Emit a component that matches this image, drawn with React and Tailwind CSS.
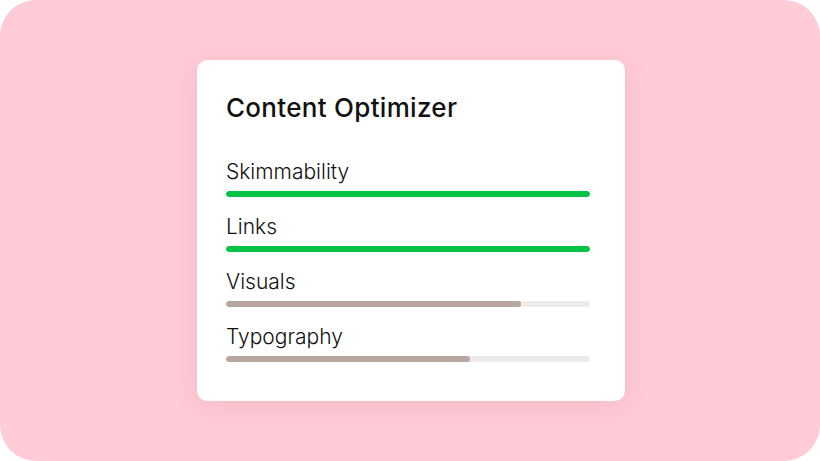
export default function App() {
  const rows = [
    { label: "Skimmability", pct: 100, color: "bg-[#00c244]" },
    { label: "Links", pct: 100, color: "bg-[#00c244]" },
    { label: "Visuals", pct: 81, color: "bg-[#b7a79f]" },
    { label: "Typography", pct: 67, color: "bg-[#b7a79f]" },
  ];
  return (
    <div className="w-[820px] h-[461px] bg-white">
      <div
        className="w-full h-full rounded-[36px] bg-[#ffcbd6] pl-[197px] pt-[60px]"
        style={{ fontFamily: "Inter, 'Noto Sans', sans-serif" }}
      >
        <div className="w-[428px] bg-white rounded-[10px] shadow-[0_4px_24px_rgba(120,40,60,0.10)] pl-[29px] pt-[32px] pb-[39px] text-[#111111]">
          <div className="text-[26px] leading-[32px] font-medium tracking-[0.3px]">Content Optimizer</div>
          <div className="mt-[34px] flex flex-col gap-[16px]">
            {rows.map((r) => (
              <div key={r.label} className="flex flex-col">
                <div className="text-[21px] leading-[28px] font-light">{r.label}</div>
                <div className="mt-[5px] w-[364px] h-[6px] rounded-full bg-[#ebebeb] overflow-hidden">
                  <div className={`h-full rounded-full ${r.color}`} style={{ width: `${r.pct}%` }} />
                </div>
              </div>
            ))}
          </div>
        </div>
      </div>
    </div>
  );
}
